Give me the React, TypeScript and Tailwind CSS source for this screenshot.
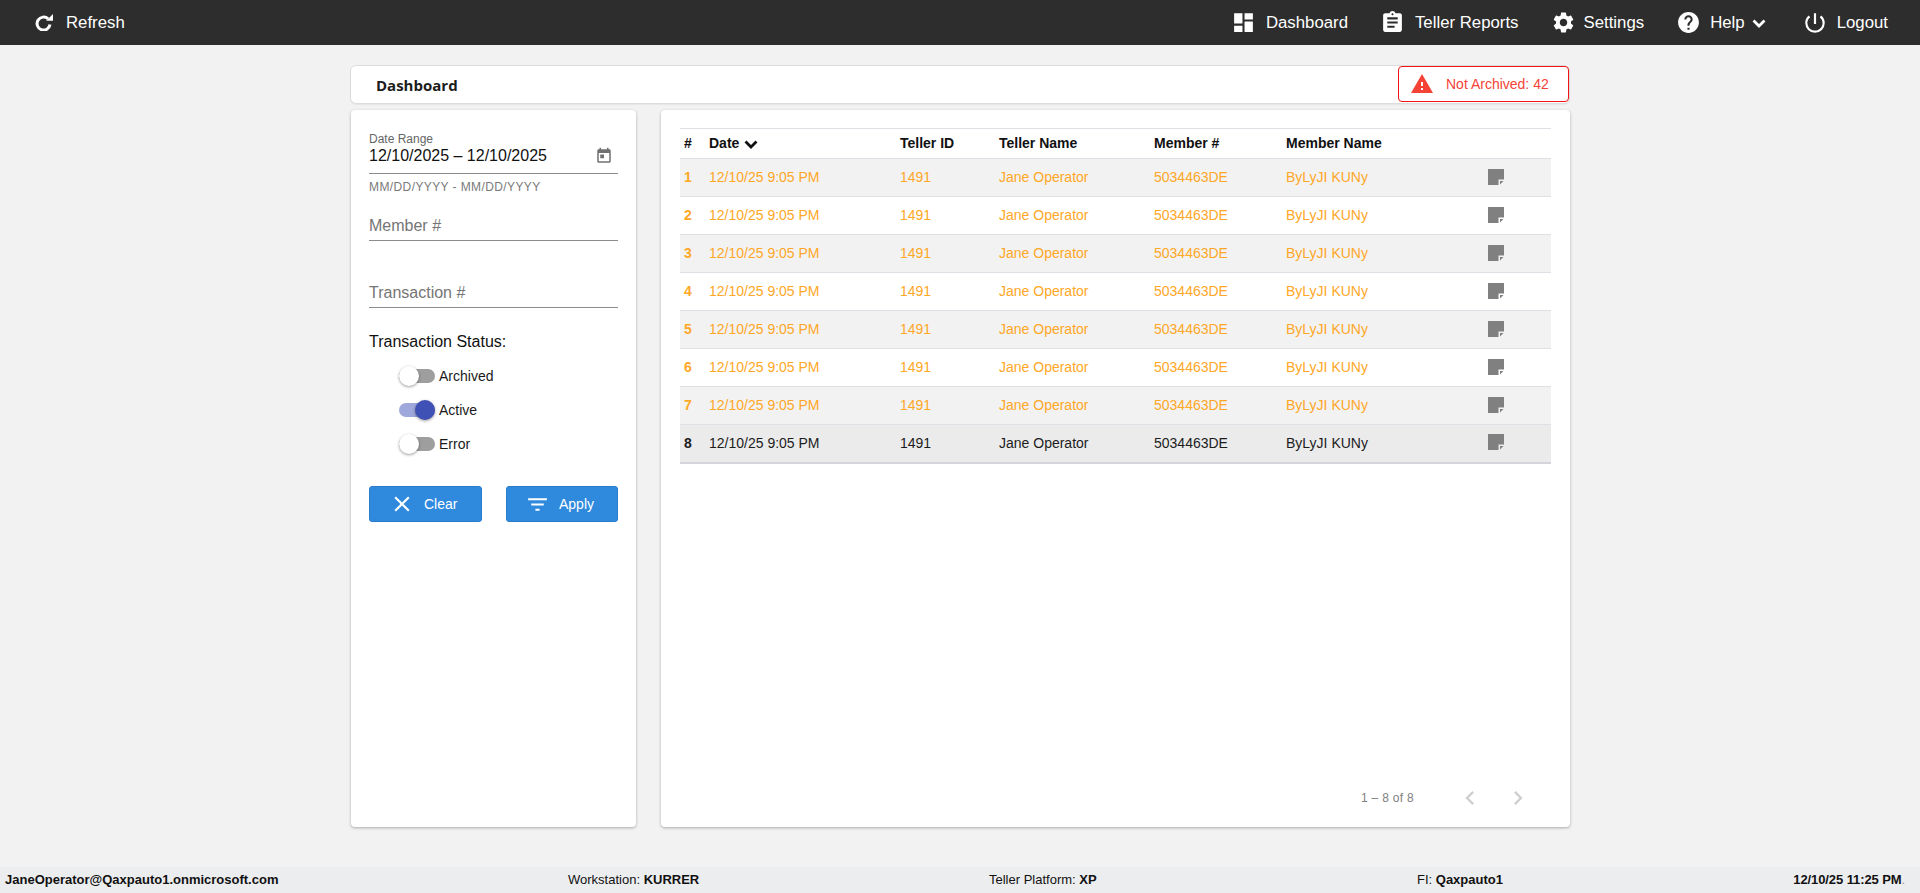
import React from "react";
import {
  MdDashboard, MdAssignment, MdSettings, MdHelp, MdPowerSettingsNew,
  MdWarning, MdToday, MdClose, MdFilterList, MdChevronLeft, MdChevronRight,
} from "react-icons/md";

const NavItem = ({ icon, label, extra, className }: { icon: React.ReactNode; label: string; extra?: React.ReactNode; className?: string }) => (
  <div className={"flex items-center text-[16.8px] text-white " + (className ?? "")}>
    {icon}
    <span>{label}</span>
    {extra}
  </div>
);

const RefreshIcon = () => (
  <svg viewBox="0 0 18 17" className="ml-[3px] mr-[13px] h-[17px] w-[18px]" fill="none">
    <path d="M13.1 4.9A6.5 6.5 0 1 0 15 10.6" stroke="white" strokeWidth="3" />
    <path d="M18 0V6.8H11.2Z" fill="white" />
  </svg>
);

const Chevron = ({ className }: { className: string }) => (
  <svg viewBox="0 0 24 24" className={className} fill="none">
    <path d="M6.5 9.5L12 15L17.5 9.5" stroke="currentColor" strokeWidth="2.8" />
  </svg>
);

const NoteIcon = () => (
  <svg viewBox="0 0 16 16" className="h-[16px] w-[16px]">
    <path d="M0 0H16V10.5H10.5V16H0Z" fill="#808080" />
    <path d="M12 12H15.5L12 15.5Z" fill="#808080" />
  </svg>
);

const Toggle = ({ on, label }: { on?: boolean; label: string }) => (
  <div className="flex h-[34px] items-center pl-[30px]">
    <div className={"relative h-[14px] w-[36px] rounded-full " + (on ? "bg-[#9fa8da]" : "bg-[#9e9e9e]")}>
      <div
        className={
          "absolute top-[-3px] h-[20px] w-[20px] rounded-full shadow-[0_1px_3px_rgba(0,0,0,0.4)] " +
          (on ? "right-0 bg-[#3f51b5]" : "left-0 bg-white")
        }
      />
    </div>
    <span className="ml-[4px] text-[14px] text-[#1a1a1a]">{label}</span>
  </div>
);

const rows = [1, 2, 3, 4, 5, 6, 7, 8];

export default function App() {
  return (
    <div className="flex h-screen flex-col overflow-hidden bg-[#f2f2f2] font-['Liberation_Sans',Arial,sans-serif]">
      <header className="flex h-[45px] shrink-0 items-center justify-between bg-[#2d2d2d] pl-[32px] pr-[32px]">
        <NavItem icon={<RefreshIcon />} label="Refresh" />
        <div className="flex items-center">
          <NavItem icon={<MdDashboard className="mr-[10px] h-[25px] w-[25px]" />} label="Dashboard" />
          <NavItem className="ml-[32px]" icon={<MdAssignment className="mr-[10px] h-[25px] w-[25px]" />} label="Teller Reports" />
          <NavItem className="ml-[32px]" icon={<MdSettings className="mr-[8px] h-[25px] w-[25px]" />} label="Settings" />
          <NavItem
            className="ml-[32px]"
            icon={<MdHelp className="mr-[9px] h-[25px] w-[25px]" />}
            label="Help"
            extra={<Chevron className="ml-[2px] h-[24px] w-[24px]" />}
          />
          <NavItem className="ml-[31px]" icon={<MdPowerSettingsNew className="mr-[9px] h-[26px] w-[26px]" />} label="Logout" />
        </div>
      </header>

      <main className="mx-auto flex w-[1220px] flex-1 flex-col pb-[40px] pt-[20px]">
        <div className="flex h-[39px] shrink-0 items-center justify-between rounded-[6px] border border-[#dcdcdc] bg-white shadow-[0_1px_1px_rgba(0,0,0,0.05)]">
          <span className="pl-[25px] pt-[2px] font-['Open_Sans',sans-serif] text-[15px] font-bold text-[#1c1c1c]">Dashboard</span>
          <div className="mb-[1px] flex h-[36px] w-[171px] items-center rounded-[4px] border-[1.5px] border-[#f01414] pl-[11px] text-[14px] text-[#f44336]">
            <MdWarning className="mr-[12px] h-[24px] w-[24px] text-[#f44336]" />
            <span>Not Archived: 42</span>
          </div>
        </div>

        <div className="ml-[1px] mt-[6px] flex flex-1 gap-[25px]">
          <aside className="w-[285px] rounded-[4px] bg-white px-[18px] shadow-[0_1px_3px_rgba(0,0,0,0.3)]">
            <div className="flex h-[64px] flex-col justify-end border-b border-[#8c8c8c]">
              <div className="text-[12px] leading-[14px] text-[#666666]">Date Range</div>
              <div className="mb-[7px] flex items-center justify-between pr-[5px] text-[16px] leading-[20px] text-[#111111]">
                <span>12/10/2025 – 12/10/2025</span>
                <MdToday className="h-[18px] w-[18px] text-[#707070]" />
              </div>
            </div>
            <div className="mt-[6px] text-[12px] leading-[14px] tracking-[0.4px] text-[#7a7a7a]">MM/DD/YYYY - MM/DD/YYYY</div>
            <div className="mt-[22px] h-[25px] border-b border-[#8c8c8c] text-[16px] leading-[20px] text-[#757575]">Member #</div>
            <div className="mt-[42px] h-[25px] border-b border-[#8c8c8c] text-[16px] leading-[20px] text-[#757575]">Transaction #</div>
            <div className="mt-[24px] text-[16px] leading-[20px] text-[#111111]">Transaction Status:</div>
            <div className="mt-[7px]">
              <Toggle label="Archived" />
              <Toggle on label="Active" />
              <Toggle label="Error" />
            </div>
            <div className="mt-[25px] flex justify-between">
              <button className="flex h-[36px] w-[113px] items-center rounded-[3px] border border-[#2b7dc9] bg-[#2f8ade] pl-[19px] text-[14px] text-white">
                <MdClose className="mr-[9px] h-[26px] w-[26px]" />
                Clear
              </button>
              <button className="flex h-[36px] w-[112px] items-center rounded-[3px] border border-[#2b7dc9] bg-[#2f8ade] pl-[18px] text-[14px] text-white">
                <MdFilterList className="mr-[9px] h-[25px] w-[25px]" />
                Apply
              </button>
            </div>
          </aside>

          <section className="flex flex-1 flex-col rounded-[4px] bg-white px-[19px] pt-[18px] shadow-[0_1px_3px_rgba(0,0,0,0.3)]">
            <table className="w-[871px] table-fixed border-collapse text-[14px]">
              <colgroup>
                <col className="w-[25px]" />
                <col className="w-[191px]" />
                <col className="w-[99px]" />
                <col className="w-[155px]" />
                <col className="w-[132px]" />
                <col className="w-[202px]" />
                <col className="w-[67px]" />
              </colgroup>
              <thead>
                <tr className="h-[30px] border-y border-[#dfdfe6] text-left font-bold text-[#111111]">
                  <th className="pl-[4px]">#</th>
                  <th className="pl-[4px]">
                    <span className="flex items-center">
                      Date
                      <Chevron className="h-[24px] w-[24px]" />
                    </span>
                  </th>
                  <th className="pl-[4px]">Teller ID</th>
                  <th className="pl-[4px]">Teller Name</th>
                  <th className="pl-[4px]">Member #</th>
                  <th className="pl-[4px]">Member Name</th>
                  <th />
                </tr>
              </thead>
              <tbody>
                {rows.map((n) => {
                  const last = n === 8;
                  const bg = last ? "bg-[#ebebeb] text-[#1c1c1c] border-b-2 border-[#d4d4da]" : n % 2 ? "bg-[#f2f2f3] text-[#ffa726] border-b border-[#dfdfe6]" : "bg-white text-[#ffa726] border-b border-[#dfdfe6]";
                  return (
                    <tr key={n} className={"h-[38px] " + bg}>
                      <td className="pl-[4px] font-bold">{n}</td>
                      <td className="pl-[4px]">12/10/25 9:05 PM</td>
                      <td className="pl-[4px]">1491</td>
                      <td className="pl-[4px]">Jane Operator</td>
                      <td className="pl-[4px]">5034463DE</td>
                      <td className="pl-[4px]">ByLyJI KUNy</td>
                      <td className="pb-[2px] pl-[4px]">
                        <NoteIcon />
                      </td>
                    </tr>
                  );
                })}
              </tbody>
            </table>
            <div className="mb-[15px] mt-auto flex items-center justify-end pr-[19px]">
              <span className="text-[12px] tracking-[0.3px] text-[#808080]">1 – 8 of 8</span>
              <MdChevronLeft className="ml-[42px] h-[28px] w-[28px] text-[#cfcfcf]" />
              <MdChevronRight className="ml-[20px] h-[28px] w-[28px] text-[#cfcfcf]" />
            </div>
          </section>
        </div>
      </main>

      <footer className="grid h-[26px] shrink-0 grid-cols-[563px_421px_428px_1fr_auto] items-center bg-[#ecedef] pl-[5px] pr-[15px] text-[13px] text-[#111111]">
        <b>JaneOperator@Qaxpauto1.onmicrosoft.com</b>
        <span>Workstation: <b>KURRER</b></span>
        <span>Teller Platform: <b>XP</b></span>
        <span>FI: <b>Qaxpauto1</b></span>
        <span className="tracking-[-0.1px]"><b>12/10/25 11:25 PM</b><span className="text-[#9a9a9a]">.</span></span>
      </footer>
    </div>
  );
}
